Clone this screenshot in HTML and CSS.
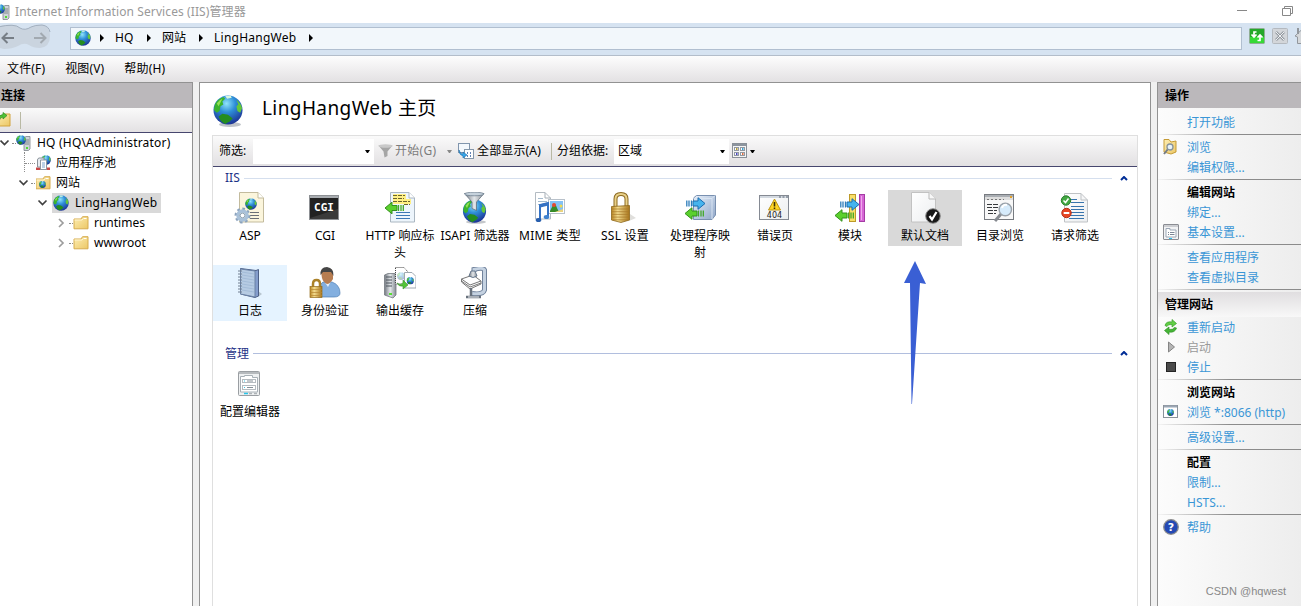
FILE: index.html
```html
<!DOCTYPE html>
<html lang="zh-CN">
<head>
  <meta charset="UTF-8">
  <title>Internet Information Services (IIS)管理器</title>
  <link rel="stylesheet" href="styles.css">
</head>
<body>
  <!-- shared icon shapes -->
  <svg class="defs" width="0" height="0">
    <defs>
      <radialGradient id="sea" cx="45%" cy="28%" r="75%">
        <stop offset="0" stop-color="#8fe4fa"/>
        <stop offset="0.4" stop-color="#2f8fd8"/>
        <stop offset="1" stop-color="#1a2c90"/>
      </radialGradient>
      <linearGradient id="paper" x1="0" y1="0" x2="1" y2="1">
        <stop offset="0" stop-color="#ffffff"/>
        <stop offset="1" stop-color="#eceef0"/>
      </linearGradient>
      <linearGradient id="gold" x1="0" y1="0" x2="1" y2="0">
        <stop offset="0" stop-color="#b98522"/>
        <stop offset="0.35" stop-color="#f3dc8e"/>
        <stop offset="1" stop-color="#a8741a"/>
      </linearGradient>
      <linearGradient id="folder" x1="0" y1="0" x2="1" y2="1">
        <stop offset="0" stop-color="#fdeeb4"/>
        <stop offset="1" stop-color="#ecc765"/>
      </linearGradient>
      <linearGradient id="steel" x1="0" y1="0" x2="1" y2="0">
        <stop offset="0" stop-color="#737880"/>
        <stop offset="0.5" stop-color="#e3e7ea"/>
        <stop offset="1" stop-color="#858b92"/>
      </linearGradient>
      <linearGradient id="box" x1="0" y1="0" x2="1" y2="1">
        <stop offset="0" stop-color="#e8f0fa"/>
        <stop offset="1" stop-color="#8fa6c8"/>
      </linearGradient>
    </defs>
    <symbol id="globe" viewBox="0 0 32 32">
      <circle cx="16" cy="16" r="15.5" fill="url(#sea)"/>
      <path d="M2 10Q5 4 11 2L13 4L10 7L11 10L8 12L7 17L4 19L1 16Z" fill="#3bb32d"/>
      <path d="M6 23L10 20L16 21L21 25L18 28L13 31Q8 29 6 23Z" fill="#258d20"/>
      <path d="M25 5Q30 9 31 14L29 19L26 17L25 12L27 10Z" fill="#64c83a"/>
      <path d="M13 1L19 .8L20 3L15 4Z" fill="#d8f6dd"/>
      <path d="M4 9Q7 5 10 4L8 8L6 12Z" fill="#93df55"/>
    </symbol>
    <symbol id="folder-icon" viewBox="0 0 16 14">
      <path d="M1 3H8L9.5 .7H15V12.8H1Z" fill="url(#folder)" stroke="#d6ac4f"/>
      <path d="M10.5 2.5H13.5" stroke="#fff"/>
      <path d="M1.5 4H9L10 3" fill="none" stroke="#fff4cf"/>
    </symbol>
    <symbol id="arrow-left" viewBox="0 0 20 13">
      <path d="M1 6.5L8 .7V4H13V9H8V12.3Z" fill="#5bd02d" stroke="#33901c"/>
      <path d="M14.5 3.6V9.4M17 3.6V9.4M19.3 3.6V9.4" stroke="#43a727" stroke-width="1.3"/>
    </symbol>
    <symbol id="arrow-right" viewBox="0 0 20 13">
      <path d="M19 6.5L12 .7V4H7V9H12V12.3Z" fill="#46b4ee" stroke="#1b6cae"/>
      <path d="M5.5 3.6V9.4M3 3.6V9.4M.8 3.6V9.4" stroke="#2b7cba" stroke-width="1.3"/>
    </symbol>
    <symbol id="window-form" viewBox="0 0 16 16">
      <rect x=".5" y=".5" width="15" height="15" rx=".5" fill="#f2f3f5" stroke="#8b8d93"/>
      <path d="M1 2H15" stroke="#a8aab0"/>
      <path d="M3 13V4.5H7V6H13V13Z" fill="#fff" stroke="#9ca7b5"/>
      <path d="M5 8.5H6M7 8.5H11.5M5 10.5H6M7 10.5H11.5" stroke="#7c8796"/>
      <path d="M6 14.5H9" stroke="#2cc0ee"/>
    </symbol>
    <symbol id="server" viewBox="0 0 16 16">
      <path d="M8 3L10 1.5H14V14L12.500 15.500H8Z" fill="#cfd4d8" stroke="#7d848b" stroke-width=".8"/>
      <path d="M9 5H13M9 7H13M9 9H13" stroke="#6b737a" stroke-width=".8"/>
      <rect x="10" y="12" width="2" height="2" fill="#53d837"/>
      <use href="#globe" x="0" y="0" width="10" height="10"/>
    </symbol>
  </svg>

  <header class="titlebar">
    <svg class="app-icon" width="16" height="16"><use href="#server"/></svg>
    <span class="app-title">Internet Information Services (IIS)管理器</span>
    <svg class="window-buttons" width="60" height="16" fill="none" stroke="#888">
      <path d="M1 8.500H11"/>
      <path d="M46.500 6.500H54.500V13.500H46.500ZM48.500 6V4.500H56.500V11.500H55"/>
    </svg>
  </header>

  <div class="addressbar">
    <svg class="history" width="52" height="28">
      <path d="M-6 14Q-6 2 6 2Q15 1 20 5Q25 8 31 4Q35 2 42 2Q50 3 50 13Q50 24 40 25Q33 25 29 22Q24 19 18 23Q12 26 4 26Q-6 25-6 14Z" fill="#cad4df"/>
      <path d="M-2 4Q15 0 20 5Q25 8 31 4Q35 2 42 2Q49 3 50 9" fill="none" stroke="#a3b0bf"/>
      <path d="M14 15H3M7.500 10L2.500 15L7.500 20" fill="none" stroke="#777e86" stroke-width="2"/>
      <path d="M34 15H45M40.500 10L45.500 15L40.500 20" fill="none" stroke="#a2a9b0" stroke-width="2"/>
    </svg>
    <nav class="path">
      <svg class="path-globe" width="16" height="16"><use href="#globe"/></svg>
      <i class="chevron"></i><span class="crumb crumb-hq">HQ</span>
      <i class="chevron"></i><span class="crumb crumb-sites">网站</span>
      <i class="chevron"></i><span class="crumb crumb-site">LingHangWeb</span>
      <i class="chevron"></i>
    </nav>
    <div class="address-actions">
      <svg width="16" height="16">
        <rect x=".5" y=".5" width="15" height="15" rx="1" fill="#24a82a" stroke="#8fae94"/>
        <rect x="1" y="9" width="14" height="6" fill="#35d936"/>
        <path d="M7.500 4H5V9M2.500 6.500L5 9L7.500 6.500M8.500 12.500H11V7.500M8.500 9.500L11 7L13.500 9.500" fill="none" stroke="#fff" stroke-width="1.700"/>
      </svg>
      <svg width="16" height="16">
        <rect x=".5" y=".5" width="15" height="15" rx="1" fill="#d3d6da" stroke="#b4b9bf"/>
        <path d="M4 4L12 12M12 4L4 12" stroke="#959ba2" stroke-width="2.500"/>
        <path d="M4 4L12 12M12 4L4 12" stroke="#eef0f2"/>
      </svg>
      <svg width="16" height="16">
        <path d="M0 8L8 .5L15 8L13 9V15.500H2.500V9Z" fill="#d5d8db" stroke="#92979d"/>
        <path d="M3 0V6" stroke="#92979d" stroke-width="2"/>
      </svg>
    </div>
  </div>

  <div class="menubar">
    <span>文件(F)</span>
    <span>视图(V)</span>
    <span>帮助(H)</span>
  </div>

  <main class="panes">
    <aside class="connections">
      <h2 class="pane-title">连接</h2>
      <div class="connections-toolbar">
        <svg width="16" height="16">
          <path d="M1 4H8L9.500 2H15V14H1Z" fill="url(#folder)" stroke="#d2a43f"/>
          <path d="M4 9Q5 5 8 5V7L12 3.500L8 .5V2.500Q4 3 1 8Z" fill="#4fc236" stroke="#2e8d22" stroke-width=".7"/>
        </svg>
        <i class="separator"></i>
      </div>
      <div class="tree">
        <div class="node level-0">
          <svg class="toggle" width="11" height="10"><path d="M1.500 2.500L5.500 6.500L9.500 2.500"/></svg>
          <i class="dots"></i>
          <svg class="node-icon" width="16" height="16"><use href="#server"/></svg>
          <span class="node-server">HQ (HQ\Administrator)</span>
        </div>
        <div class="node level-1 leaf">
          <i class="dots long"></i>
          <svg class="node-icon" width="16" height="16">
            <use href="#globe" x="5" y="0" width="10" height="10"/>
            <path d="M0 12.500H14V15H0Z" fill="#c94747"/>
            <path d="M1.500 5Q1.500 3.500 3 3H8V12H1.500Z" fill="#e9edf1" stroke="#8a929b"/>
            <path d="M4.500 5H10.500V14.500H4.500Z" fill="#fff" stroke="#8d97a3"/>
            <path d="M6 8H9M6 10H9M6 12H9" stroke="#78a3cf"/>
          </svg>
          <span>应用程序池</span>
        </div>
        <div class="node level-1">
          <svg class="toggle" width="11" height="10"><path d="M1.500 2.500L5.500 6.500L9.500 2.500"/></svg>
          <i class="dots"></i>
          <svg class="node-icon" width="16" height="16">
            <use href="#folder-icon" x="-1" y="1" width="16" height="14"/>
            <use href="#globe" x="3" y="6" width="7" height="7"/>
          </svg>
          <span>网站</span>
        </div>
        <div class="node level-2 selected">
          <svg class="toggle" width="11" height="10"><path d="M1.500 2.500L5.500 6.500L9.500 2.500"/></svg>
          <span class="selection">
            <svg class="node-icon" width="16" height="16"><use href="#globe"/></svg>
            <span class="node-site">LingHangWeb</span>
          </span>
        </div>
        <div class="node level-3">
          <svg class="toggle closed" width="11" height="10"><path d="M3 1L7 5L3 9"/></svg>
          <i class="dots"></i>
          <svg class="node-icon" width="16" height="14"><use href="#folder-icon"/></svg>
          <span>runtimes</span>
        </div>
        <div class="node level-3">
          <svg class="toggle closed" width="11" height="10"><path d="M3 1L7 5L3 9"/></svg>
          <i class="dots"></i>
          <svg class="node-icon" width="16" height="14"><use href="#folder-icon"/></svg>
          <span>wwwroot</span>
        </div>
      </div>
    </aside>

    <section class="home">
      <div class="home-title">
        <svg width="32" height="34">
          <ellipse cx="18" cy="29.500" rx="11" ry="2.500" fill="#bfc3c8"/>
          <use href="#globe" x="1" y="0" width="30" height="30"/>
        </svg>
        <h1>LingHangWeb 主页</h1>
      </div>

      <div class="features">
        <div class="filterbar">
          <span class="filter-label">筛选:</span>
          <span class="combo combo-filter"><i class="caret"></i></span>
          <svg class="filter-icon" width="15" height="14">
            <path d="M.5 1.500L5.500 7.500L6.500 13.500L9.500 12V7.500L14.500 1.500Z" fill="#a5a5a5"/>
            <ellipse cx="7.500" cy="2" rx="7" ry="1.700" fill="#c9c9c9"/>
          </svg>
          <span class="go">开始(G)</span>
          <i class="caret faded"></i>
          <svg class="show-icon" width="16" height="16">
            <rect x=".5" y=".5" width="11" height="9" fill="#f3f8fc" stroke="#8095ad"/>
            <rect x="6.500" y="6.500" width="9" height="9" fill="#fff" stroke="#8497aa"/>
            <path d="M9 10H10M12 10H13M9 13H10M12 13H13" stroke="#315b9f" stroke-width="1.300"/>
            <path d="M1 7Q2 11 5 11V9L9 12L5 15V13Q1 12 1 7Z" fill="#38a6e8" stroke="#1a6faf" stroke-width=".6"/>
          </svg>
          <span class="show-all">全部显示(A)</span>
          <i class="separator"></i>
          <span class="group-label">分组依据:</span>
          <span class="combo combo-group">区域<i class="caret"></i></span>
          <svg class="view-icon" width="16" height="16">
            <rect x=".5" y=".5" width="14" height="14" fill="#f5f5f5" stroke="#8a9098"/>
            <path d="M1 2H14" stroke="#8c949e" stroke-width="2"/>
            <g fill="#fff" stroke="#9299a2">
              <rect x="2.500" y="4.500" width="4" height="3"/><rect x="8.500" y="4.500" width="4" height="3"/>
              <rect x="2.500" y="9.500" width="4" height="3"/><rect x="8.500" y="9.500" width="4" height="3"/>
            </g>
            <path d="M4 6H5.500" stroke="#b59e38" stroke-width="2"/><path d="M10 6H11.500" stroke="#3aa0d0" stroke-width="2"/>
            <path d="M4 11H5.500" stroke="#4744c4" stroke-width="2"/><path d="M10 11H11.500" stroke="#dd6c3f" stroke-width="2"/>
          </svg>
          <i class="caret"></i>
        </div>

        <div class="group-head group-iis"><span>IIS</span><i class="rule"></i><svg class="collapse" width="8" height="5"><path d="M1 4L4 1L7 4"/></svg></div>
        <div class="tiles">
          <div class="tile">
            <svg width="32" height="32">
              <path d="M5.500.5H24L29.500 6V30H5.500Z" fill="#fbf5dc" stroke="#c3bb9d"/>
              <path d="M24 .5V6H29.500" fill="#fff" stroke="#c3bb9d"/>
              <use href="#globe" x="11" y="6" width="12" height="12"/>
              <path d="M16 20.500H25M16 23.500H25M16 26.500H25" stroke="#6b6f76"/>
              <circle cx="8.500" cy="23.500" r="6.700" fill="none" stroke="#8ba3bd" stroke-width="2.500" stroke-dasharray="2.600 2.600"/>
              <circle cx="8.500" cy="23.500" r="4.500" fill="none" stroke="#a9c1d9" stroke-width="3.500"/>
              <circle cx="8.500" cy="23.500" r="2.300" fill="#fff" stroke="#7890aa" stroke-width=".8"/>
            </svg>
            <span>ASP</span>
          </div>
          <div class="tile">
            <svg width="32" height="32">
              <rect x=".5" y="3.500" width="29" height="24" fill="#222" stroke="#8d9094"/>
              <path d="M1 5H29" stroke="#a9adb1" stroke-width="2"/>
              <path d="M1 26L29 17V27H1Z" fill="#3a3a3a"/>
              <text class="cgi-text" x="15" y="19" text-anchor="middle">CGI</text>
            </svg>
            <span>CGI</span>
          </div>
          <div class="tile">
            <svg width="32" height="32">
              <path d="M6.500.5H25L30.500 6V30H6.500Z" fill="#edf5fc" stroke="#aab6c1"/>
              <path d="M25 .5V6H30.500" fill="#fff" stroke="#aab6c1"/>
              <path d="M9 2H22V7H27V12H9Z" fill="#fff083"/>
              <path d="M9 3.500H21M9 6.500H20M9 9.500H26M20 12.500H26" stroke="#6b642d" stroke-dasharray="4 1"/>
              <path d="M12 20.500H26M12 23.500H26M12 26.500H26" stroke="#3c78b5"/>
              <use href="#arrow-left" x="0" y="9" width="20" height="14"/>
            </svg>
            <span>HTTP 响应标<br>头</span>
          </div>
          <div class="tile">
            <svg width="32" height="32">
              <ellipse cx="17" cy="30" rx="10" ry="1.700" fill="#c4c7cb"/>
              <use href="#globe" x="3.500" y="7" width="24" height="24"/>
              <path d="M5.500 1.500L13 10V16.500L17.500 18.500V10L25 1.500Z" fill="url(#steel)" stroke="#566676" stroke-width=".7"/>
              <ellipse cx="15.200" cy="2" rx="9.700" ry="1.800" fill="#c6d2dc" stroke="#647586" stroke-width=".7"/>
            </svg>
            <span>ISAPI 筛选器</span>
          </div>
          <div class="tile">
            <svg width="32" height="32">
              <path d="M1.500.5H11L16.500 6V27H1.500Z" fill="#fff" stroke="#b3bbc2"/>
              <path d="M11 .5V6H16.500" fill="none" stroke="#a5aeb6"/>
              <path d="M4 6.500H9M4 9.500H13M4 12.500H13" stroke="#a4bbce"/>
              <rect x="14.500" y="7.500" width="16" height="14" fill="#fff" stroke="#b8c1ca"/>
              <rect x="16" y="9" width="13" height="11" fill="#83c1f5"/>
              <path d="M16 19L19 13Q21 10 23 16L25 20H16Z" fill="#368b27"/>
              <circle cx="20" cy="13" r="2" fill="#e64731"/><circle cx="27" cy="14" r="1.500" fill="#f4da4c"/>
              <path d="M21 20L29 17V20Z" fill="#ead47f"/>
              <path d="M6 28V13L14 11V25" fill="none" stroke="#3572c4" stroke-width="2"/>
              <path d="M6 14L14 12" stroke="#3572c4" stroke-width="3"/>
              <ellipse cx="4.500" cy="28" rx="2.800" ry="2" fill="#285fae"/><ellipse cx="12.500" cy="25" rx="2.800" ry="2" fill="#3f82cf"/>
            </svg>
            <span class="mime">MIME 类型</span>
          </div>
          <div class="tile">
            <svg width="32" height="32">
              <path d="M20 29L27 26L21 22Z" fill="#e0dfdc"/>
              <path d="M6.500 17V7Q6.500 2 12 2Q17.500 2 17.500 7V17" fill="none" stroke="#8c6a21" stroke-width="4"/>
              <path d="M6.500 17V7Q6.500 2 12 2Q17.500 2 17.500 7V17" fill="none" stroke="#e8d089" stroke-width="2"/>
              <path d="M2.500 14.500L20.500 13.500V28L12 30.500L2.500 28Z" fill="url(#gold)" stroke="#8d671c" stroke-width=".8"/>
              <path d="M3 17H20M3 19.700H20M3 22.400H20M3 25.100H20M4 27.800H19" stroke="#a8782a" stroke-width=".7"/>
            </svg>
            <span class="ssl">SSL 设置</span>
          </div>
          <div class="tile">
            <svg width="32" height="32">
              <path d="M9.500 6L12.500 3.500H31.500V23L28 27.500H9.500Z" fill="url(#box)" stroke="#7990b0"/>
              <path d="M9.500 6.500H28V27M28 6.500L31 3.500" fill="none" stroke="#d8e4f2"/>
              <use href="#arrow-right" x="2" y="5" width="20" height="13"/>
              <use href="#arrow-left" x="0" y="15" width="20" height="13"/>
            </svg>
            <span>处理程序映<br>射</span>
          </div>
          <div class="tile">
            <svg width="32" height="32">
              <rect x=".5" y="3.500" width="29" height="24" fill="url(#paper)" stroke="#858a93"/>
              <path d="M1 5H29" stroke="#d3d9e0" stroke-width="2"/><path d="M20 5H22M23.500 5H25.500M27 5H29" stroke="#596572"/>
              <path d="M15.500 7L21.500 18H9.500Z" fill="#ffd524" stroke="#bc9415"/>
              <path d="M15.500 10V14.500M15.500 15.500V17" stroke="#3c3107" stroke-width="1.600"/>
              <text class="error-text" x="15.500" y="26" text-anchor="middle">404</text>
            </svg>
            <span>错误页</span>
          </div>
          <div class="tile">
            <svg width="32" height="32">
              <rect x="15.500" y="2.500" width="6" height="27" fill="#f8df68" stroke="#bd9a29"/>
              <rect x="25.500" y="2.500" width="5" height="27" fill="#d666d5" stroke="#a43ca4"/>
              <path d="M27.500 4V28" stroke="#efa9ec"/>
              <use href="#arrow-right" x="6" y="6" width="20" height="13"/>
              <use href="#arrow-left" x="0" y="17" width="20" height="13"/>
            </svg>
            <span>模块</span>
          </div>
          <div class="tile active">
            <svg width="32" height="32">
              <path d="M2.500.5H20L26.500 7V30H2.500Z" fill="url(#paper)" stroke="#c2c2c2"/>
              <path d="M20 .5V7H26.500" fill="#f8f8f8" stroke="#b8b8b8"/>
              <circle cx="24" cy="24" r="7.300" fill="#171717" stroke="#8c8c8c"/>
              <path d="M20.500 24L23 27.500L27.500 20" fill="none" stroke="#fff" stroke-width="2.200"/>
            </svg>
            <span>默认文档</span>
          </div>
          <div class="tile">
            <svg width="32" height="32">
              <rect x=".5" y="2.500" width="29" height="25" fill="#f8f8f8" stroke="#777b80"/>
              <path d="M1 4H29" stroke="#aaaeb3" stroke-width="2"/><path d="M1 6.500H29" stroke="#dedede" stroke-width="3"/>
              <path d="M3 7.500H20" stroke="#777" stroke-dasharray="2 2"/><path d="M26 5H28" stroke="#e3a22c" stroke-width="2"/>
              <path d="M3 12.500H15M3 15.500H14M4 18.500H13M4 21.500H12" stroke="#36393c" stroke-dasharray="5 1"/>
              <path d="M17 22L11 29" stroke="#868a90" stroke-width="3"/>
              <circle cx="21.300" cy="17.500" r="6.200" fill="#d6ebfb" stroke="#9aa2aa" stroke-width="1.400"/>
              <path d="M18 16Q19 12 23 13" fill="none" stroke="#fff" stroke-width="2"/>
            </svg>
            <span>目录浏览</span>
          </div>
          <div class="tile">
            <svg width="32" height="32">
              <path d="M5.500 1.500H22L28.500 8V30H5.500Z" fill="url(#paper)" stroke="#bfc2c5"/>
              <path d="M22 1.500V8H28.500" fill="none" stroke="#bfc2c5"/>
              <path d="M12 7.500H18M12 10.500H25M12 14.500H25M12 17.500H25M12 20.500H25M10 23.500H25M10 26.500H25" stroke="#3774ad"/>
              <circle cx="7" cy="8.500" r="4.700" fill="#43a843" stroke="#267d2b"/><path d="M4.500 8.500L6.500 10.500L9.500 6.500" fill="none" stroke="#fff" stroke-width="1.500"/>
              <circle cx="7.500" cy="21" r="4.700" fill="#e74624" stroke="#b42d16"/><path d="M4.700 21H10.300" stroke="#fff" stroke-width="2"/>
            </svg>
            <span>请求筛选</span>
          </div>
          <div class="tile hover">
            <svg width="32" height="32">
              <path d="M24 30L28 27L24 24Z" fill="#b8c5d0"/>
              <path d="M6.500 1.500L22 3.500L24.500 2.500V29L21 30.500L6.500 27Z" fill="#849dcc" stroke="#4d6087"/>
              <path d="M6.500 2L21 4V30L6.500 27Z" fill="#b6cbe3" stroke="#6980a4"/>
              <path d="M8 5L20 7M8 8L20 10M8 11L20 13M8 14L20 16M8 17L20 19M8 20L20 22M8 23L20 25" stroke="#9bb5d2" stroke-width=".7"/>
              <path d="M4 4H8M4 7H8M4 10H8M4 13H8M4 16H8M4 19H8M4 22H8M4 25H8" stroke="#707f91"/>
            </svg>
            <span>日志</span>
          </div>
          <div class="tile">
            <svg width="32" height="32">
              <path d="M9 30Q8 19 14 15H23Q31 18 31 26Q31 30 25 30Z" fill="#83afdf" stroke="#4f80b5" stroke-width=".7"/>
              <path d="M15 14L19 20L22 14Z" fill="#e8eff6"/>
              <path d="M12 5Q12 1 18 1Q24 1 24 7V12Q21 17 18 17Q14 15 13 11Z" fill="#b77d51"/>
              <path d="M11.500 8Q11 0 18 0Q25 1 24.500 9L22 5H14Z" fill="#454545"/>
              <path d="M4 20V17Q4 13 7.500 13Q11 13 11 17V20" fill="none" stroke="#ab8128" stroke-width="2.500"/>
              <rect x="1" y="19.500" width="12" height="11" fill="url(#gold)" stroke="#946c1b" stroke-width=".7"/>
              <path d="M1 22.500H13M1 25.500H13M1 28.500H13" stroke="#b78732" stroke-width=".7"/>
            </svg>
            <span>身份验证</span>
          </div>
          <div class="tile">
            <svg width="32" height="32">
              <path d="M.5 8L4 6.500H12V28L9 31L.5 28Z" fill="url(#steel)" stroke="#747a80" stroke-width=".8"/>
              <path d="M2 10H8M2 13H8M2 16H8M2 19H8" stroke="#4c555d"/><path d="M5 27H8" stroke="#57dd35" stroke-width="2"/>
              <path d="M11.500.5H20L24 5V17H11.500Z" fill="#fff" stroke="#444" stroke-dasharray="1 1"/>
              <g opacity=".35"><use href="#globe" x="13" y="5" width="8" height="8"/></g>
              <path d="M20.500 5.500H28L32 9.500V21H20.500Z" fill="#fff" stroke="#a0a9b1"/>
              <use href="#globe" x="22.500" y="10" width="7.500" height="7.500"/>
              <path d="M13 16Q16 19 19 16V13L24 18L19 22V19Q15 20 13 16Z" fill="#53c337" stroke="#359329" stroke-width=".6"/>
            </svg>
            <span>输出缓存</span>
          </div>
          <div class="tile">
            <svg width="32" height="32">
              <path d="M15 5V2.500Q24 0 25.500 3V23Q24 28 13 26.500" fill="none" stroke="#71839c" stroke-width="5"/>
              <path d="M15 5V2.500Q24 0 25.500 3V23Q24 28 13 26.500" fill="none" stroke="#c5d2e1" stroke-width="3"/>
              <path d="M2.500 12L14 8L22 14V17L11 22L2.500 15Z" fill="#fff" stroke="#777"/>
              <path d="M2.500 12L11 18L22 14M2.500 14L11 20L22 16" fill="none" stroke="#777"/>
              <path d="M10 9L12 4H16L18 9Q14 12 10 9Z" fill="url(#steel)" stroke="#66788d"/>
              <path d="M12 21V30M7 30H22" stroke="#68717c" stroke-width="2.500"/><path d="M9 30H20" stroke="#e9edf0"/>
            </svg>
            <span>压缩</span>
          </div>
        </div>

        <div class="group-head group-manage"><span>管理</span><i class="rule"></i><svg class="collapse" width="8" height="5"><path d="M1 4L4 1L7 4"/></svg></div>
        <div class="tiles">
          <div class="tile">
            <svg width="32" height="32">
              <rect x="4.500" y="3.500" width="21" height="24" rx="1" fill="#eef0f1" stroke="#9a9ea2"/>
              <path d="M5 5H25" stroke="#b6babd" stroke-width="2"/>
              <path d="M6.500 24V8.500H10.500V7.500H18.500V9.500H23.500V24Z" fill="#fff" stroke="#a8b0b6"/>
              <rect x="8.500" y="11.500" width="13" height="3" fill="#fff" stroke="#b5bbc0"/><rect x="8.500" y="17.500" width="13" height="4" fill="#fff" stroke="#b5bbc0"/>
              <path d="M13 13H19M13 19.500H19" stroke="#858f97"/><path d="M10 13H11M10 19.500H11" stroke="#38c5e7"/>
              <path d="M10 25.500H14" stroke="#29c5e9" stroke-width="1.500"/><path d="M15 25.500H18M20 25.500H23" stroke="#aeb3b7" stroke-width="1.500"/>
            </svg>
            <span>配置编辑器</span>
          </div>
        </div>
      </div>
    </section>

    <aside class="actions">
      <h2 class="pane-title">操作</h2>
      <div class="action-list">
        <div class="action">打开功能</div>
        <hr>
        <div class="action">
          <svg width="16" height="16">
            <path d="M1 .5H6L8 3L13 2V13L8 15L1 13Z" fill="url(#folder)" stroke="#c59b36"/>
            <path d="M5 10L1 15" stroke="#747c85" stroke-width="2"/>
            <circle cx="7" cy="8" r="3" fill="#e7f3fa" stroke="#85929e" stroke-width="1.300"/>
          </svg>浏览
        </div>
        <div class="action">编辑权限...</div>
        <hr>
        <div class="action heading">编辑网站</div>
        <div class="action">绑定...</div>
        <div class="action"><svg width="16" height="16"><use href="#window-form"/></svg>基本设置...</div>
        <hr>
        <div class="action">查看应用程序</div>
        <div class="action">查看虚拟目录</div>
        <hr>
        <div class="section-title">管理网站</div>
        <div class="action">
          <svg width="16" height="16">
            <path d="M2 6.500Q3 2 9 3V.5L13.500 4.500L9 8V5.500Q5 5 4 7.500Z" fill="#61ce45" stroke="#3a9e2b" stroke-width=".7"/>
            <path d="M13.500 9Q12 14 6 13V15.500L1.500 11.500L6 8V10.500Q10 11 11.500 8.500Z" fill="#45b536" stroke="#339229" stroke-width=".7"/>
          </svg>重新启动
        </div>
        <div class="action disabled"><svg width="16" height="16"><path d="M5.500 3V13L11.500 8Z" fill="#b5b5b5" stroke="#858585"/></svg>启动</div>
        <div class="action"><svg width="16" height="16"><rect x="3.500" y="3.500" width="9" height="9" fill="#4a4a4a" stroke="#252525"/></svg>停止</div>
        <hr>
        <div class="action heading">浏览网站</div>
        <div class="action">
          <svg width="16" height="16">
            <rect x=".5" y="1.500" width="14" height="12" fill="#fff" stroke="#8b929a"/>
            <path d="M1 2.500H14" stroke="#9ba6b4" stroke-width="2"/>
            <use href="#globe" x="4" y="5" width="7" height="7"/>
          </svg><span class="port">浏览 *:8066 (http)</span>
        </div>
        <hr>
        <div class="action">高级设置...</div>
        <hr>
        <div class="action heading">配置</div>
        <div class="action">限制...</div>
        <div class="action">HSTS...</div>
        <hr>
        <div class="action">
          <svg width="16" height="16">
            <circle cx="8" cy="8" r="7.300" fill="#2449b4" stroke="#8d8d8d" stroke-width="1.300"/>
            <text class="help-text" x="8" y="12" text-anchor="middle">?</text>
          </svg>帮助
        </div>
      </div>
    </aside>
  </main>

  <svg class="pointer" width="24" height="144"><path d="M12 0L23 23L17 22L9 143H8.500L7 22H1Z" fill="#3a5fd4"/></svg>
  <span class="watermark">CSDN @hqwest</span>
</body>
</html>
```

FILE: styles.css
```css
* {
  box-sizing: border-box;
}

body {
  margin: 0;
  width: 1301px;
  height: 606px;
  overflow: hidden;
  position: relative;
  display: flex;
  flex-direction: column;
  background-color: #f0f0f0;
  color: #000;
  font-family: "Noto Sans", "Noto Sans CJK SC", sans-serif;
  font-size: 12px;
  line-height: 20px;
  white-space: nowrap;
}

svg {
  display: block;
  flex: none;
}

.defs {
  position: absolute;
}

h1,
h2 {
  margin: 0;
}

/* title and address */
.titlebar {
  height: 23px;
  flex: none;
  display: flex;
  align-items: center;
  background-color: #fff;
  color: #999;
}

.app-icon {
  margin-left: -5px;
}

.app-title {
  margin-left: 4px;
  letter-spacing: 0.1px;
}

.window-buttons {
  margin-left: auto;
  margin-right: 5px;
  margin-bottom: 3px;
}

.addressbar {
  height: 33px;
  flex: none;
  display: flex;
  align-items: flex-start;
  background-color: #d6e3f1;
  border-bottom: 1px solid #b3bdca;
}

.history {
  width: 70px;
}

.path {
  width: 1172px;
  height: 23px;
  flex: none;
  margin-top: 4px;
  padding: 0 0 2px 5px;
  display: flex;
  align-items: center;
  background-color: #f2f7fb;
  border: 1px solid #b1bfd0;
}

.chevron {
  width: 4px;
  flex: none;
  border-left: 4px solid #000;
  border-top: 4px solid transparent;
  border-bottom: 4px solid transparent;
}

.path-globe {
  margin-left: -1px;
  margin-right: 9px;
}

.crumb {
  margin-left: 11px;
}

.crumb-hq {
  width: 32px;
}

.crumb-sites {
  width: 37px;
}

.crumb-site {
  width: 95px;
  letter-spacing: 0.25px;
}

.address-actions {
  display: flex;
  gap: 7px;
  margin: 5px 0 0 7px;
}

.menubar {
  height: 26px;
  flex: none;
  display: flex;
  gap: 20px;
  padding: 3px 0 0 7px;
  letter-spacing: 0.15px;
  background: linear-gradient(#fdfdfd, #e3e1e3);
}

/* panes */
.panes {
  flex: 1;
  min-height: 0;
  display: flex;
}

.pane-title {
  height: 25px;
  padding-left: 1px;
  line-height: 25px;
  font-size: 12px;
  font-weight: bold;
  background-color: #bbb8bb;
}

.connections {
  width: 193px;
  background-color: #fff;
  border-top: 1px solid #929292;
  border-right: 1px solid #929292;
}

.connections-toolbar {
  height: 25px;
  display: flex;
  align-items: center;
  background: linear-gradient(#fafafa, #e3e1e3);
  border-bottom: 1px solid #46466e;
}

.connections-toolbar svg {
  margin-left: -5px;
}

.separator {
  width: 1px;
  height: 17px;
  background-color: #b9b9a4;
}

.connections-toolbar .separator {
  margin-left: 9px;
}

.node {
  height: 20px;
  display: flex;
  align-items: center;
}

.level-0 { margin-left: -1px; }
.level-1 { padding-left: 18px; }
.level-2 { padding-left: 37px; }
.level-3 { padding-left: 56px; }

.node.leaf {
  padding-left: 25px;
}

.toggle {
  fill: none;
  stroke: #404040;
  stroke-width: 1.7;
}

.toggle.closed {
  stroke: #9d9d9d;
}

.dots {
  width: 4px;
  margin: 0 0 0 2px;
  border-top: 1px dotted #8c8c8c;
}

.dots.long {
  width: 10px;
  margin-left: 0;
}

.leaf {
  position: relative;
}

.leaf::before {
  content: "";
  position: absolute;
  left: 24px;
  top: -1px;
  height: 20px;
  border-left: 1px dotted #8c8c8c;
}

.node-icon {
  margin-right: 4px;
}

.node-server {
  margin-left: 1px;
  letter-spacing: 0.2px;
}

.level-1 .node-icon {
  margin-left: 1px;
}

.level-3 .node-icon {
  margin-right: 5px;
}

.selection {
  width: 109px;
  height: 20px;
  margin-left: 4px;
  padding-left: 1px;
  display: flex;
  align-items: center;
  background-color: #d9d9d9;
}

.node-site {
  margin-left: 2px;
  letter-spacing: 0.25px;
}

/* main pane */
.home {
  width: 952px;
  margin-left: 6px;
  padding-left: 12px;
  display: flex;
  flex-direction: column;
  background-color: #fff;
  border: 1px solid #929292;
  border-bottom: none;
}

.home-title {
  height: 52px;
  flex: none;
  display: flex;
}

.home-title svg {
  margin-top: 12px;
}

h1 {
  margin-left: 18px;
  line-height: 51px;
  font-size: 19px;
  font-weight: normal;
  letter-spacing: 0.4px;
}

.features {
  width: 926px;
  flex: 1;
  border: 1px solid #dfdfdf;
  border-bottom: none;
}

.filterbar {
  height: 31px;
  padding-left: 6px;
  display: flex;
  align-items: center;
  background: linear-gradient(#fafafa, #e2e0e2);
  border-bottom: 1px solid #46466e;
}

.filter-label {
  width: 34px;
}

.combo {
  height: 25px;
  padding: 0 4px;
  display: flex;
  align-items: center;
  background-color: #fff;
}

.combo .caret {
  margin-left: auto;
}

.combo-filter {
  width: 121px;
}

.combo-group {
  width: 115px;
}

.caret {
  width: 5px;
  flex: none;
  border-top: 3px solid #000;
  border-left: 2.5px solid transparent;
  border-right: 2.5px solid transparent;
}

.caret.faded {
  border-top-color: #888;
}

.filter-icon {
  margin-left: 4px;
}

.go {
  width: 52px;
  margin-left: 2px;
  color: #7c7c7c;
  letter-spacing: 0.3px;
}

.show-icon {
  margin: 0 3px 0 6px;
}

.show-all {
  width: 74px;
  letter-spacing: 0.15px;
}

.group-label {
  width: 57px;
  margin-left: 5px;
}

.view-icon {
  margin: 0 2px 0 3px;
}

.group-head {
  height: 23px;
  padding: 1px 9px 0 12px;
  display: flex;
  align-items: center;
  color: #1e3287;
}

.group-iis {
  padding-top: 0;
  padding-bottom: 1px;
}

.rule {
  flex: 1;
  height: 1px;
  margin-left: 4px;
  margin-right: 8px;
  background-color: #b1bede;
}

.group-iis .rule {
  background-color: #d5dfee;
}

.collapse {
  fill: none;
  stroke: #002d96;
  stroke-width: 2;
}

.tiles {
  display: grid;
  grid-template-columns: repeat(12, 74px);
  grid-auto-rows: 75px;
  column-gap: 1px;
}

.tile {
  height: 56px;
  padding-top: 2px;
  display: flex;
  flex-direction: column;
  align-items: center;
  line-height: 17px;
  text-align: center;
}

.tile > span {
  margin-top: 3px;
}

.tile .mime {
  letter-spacing: 0.35px;
}

.tile .ssl {
  letter-spacing: 0.25px;
}

.tile.active {
  background-color: #d9d9d9;
}

.tile.hover {
  background-color: #e5f3ff;
}

.group-manage {
  height: 26px;
}

.cgi-text {
  font: bold 11px "DejaVu Sans Mono", monospace;
  fill: #fff;
}

.error-text {
  font: 8px "DejaVu Sans", sans-serif;
  fill: #222;
}

/* actions */
.actions {
  flex: 1;
  margin-left: 6px;
  background: linear-gradient(90deg, #fcfcfc, #ededed);
  border-top: 1px solid #929292;
  border-left: 1px solid #929292;
}

.actions .pane-title {
  padding-left: 7px;
}

.action-list {
  padding-top: 4px;
}

.action {
  height: 20px;
  padding-top: 2px;
  padding-left: 29px;
  display: flex;
  align-items: center;
  color: #3a96d6;
}

.action svg {
  margin-top: -2px;
  margin-left: -24px;
  margin-right: 8px;
}

.heading {
  font-weight: bold;
  color: #000;
}

.disabled {
  color: #9a9a9a;
}

.actions hr {
  height: 1px;
  margin: 2px 0;
  border: none;
  background: linear-gradient(90deg, #f5f5f5, #8b8b8b 50%);
}

.section-title {
  height: 25px;
  padding-left: 7px;
  line-height: 25px;
  font-weight: bold;
  background: linear-gradient(#e0dee0, #f8f8f8);
}

.help-text {
  font: bold 11px "DejaVu Sans", sans-serif;
  fill: #fff;
}

/* annotation over the window */
.pointer {
  position: absolute;
  left: 903px;
  top: 261px;
}

.watermark {
  position: absolute;
  right: 15px;
  bottom: 5px;
  font-family: "Liberation Sans", sans-serif;
  font-size: 11px;
  color: #888;
}
```
